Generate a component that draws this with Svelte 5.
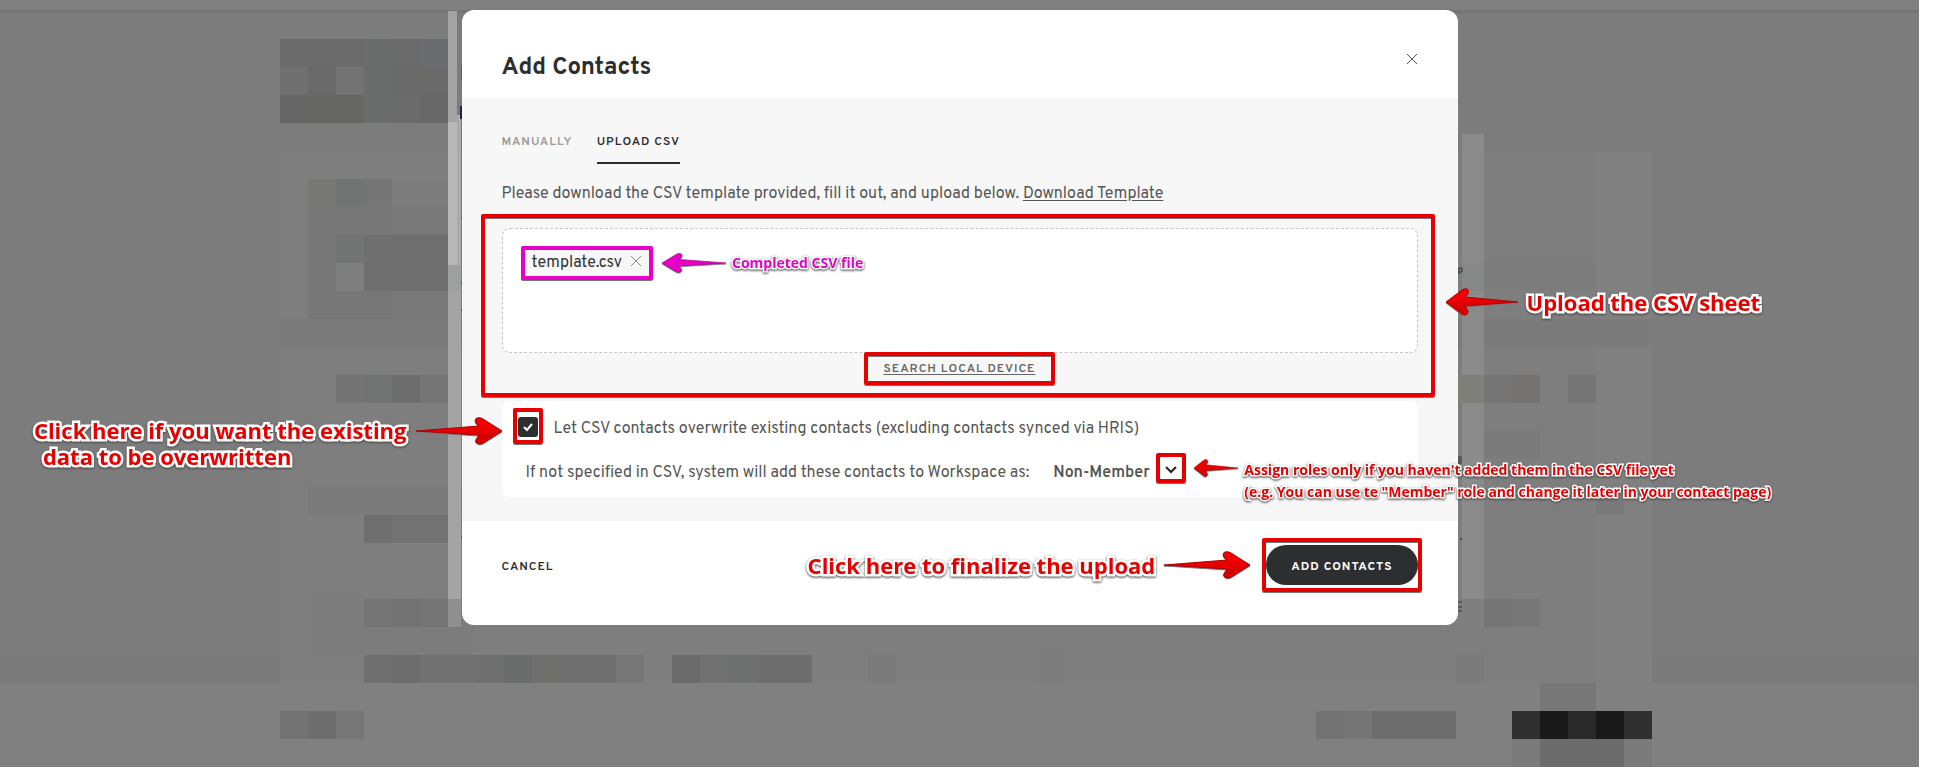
<script lang="ts">
  type Tile = [col: number, row: number, cols: number, rows: number, fill: string];

  const CELL = 28;
  const roles = ["Non-Member", "Member", "Admin"];

  let overwrite = $state(true);
  let role = $state("Non-Member");
  let tab = $state("upload");
  let files = $state(["template.csv"]);

  // pixelated page behind the dialog: column, row, width, height in cells
  const tiles: Tile[] = [
    [0, 4, 49, 19, "#7e7e7e"], [1, 4, 15, 7, "#7f7f7f"], [47, 4, 2, 19, "#808080"],
    [0, 0, 6, 1, "#6b6b6b"], [3, 0, 1, 3, "#6a6d6b"], [5, 0, 1, 1, "#6b6c6f"],
    [0, 1, 1, 1, "#707070"], [1, 1, 1, 1, "#6a6a6a"], [2, 1, 1, 1, "#737373"], [4, 1, 2, 1, "#6a6a6a"],
    [0, 2, 1, 1, "#666666"], [1, 2, 2, 1, "#666664"], [4, 2, 1, 1, "#6b6b6b"], [5, 2, 1, 1, "#676767"],
    [1, 5, 3, 5, "#777777"], [1, 5, 1, 1, "#777775"], [2, 5, 1, 1, "#717472"], [3, 5, 1, 1, "#757575"],
    [4, 5, 2, 1, "#7c7c7c"], [4, 6, 2, 4, "#787878"], [2, 7, 1, 1, "#717472"], [3, 7, 3, 2, "#6f6f6f"],
    [2, 8, 1, 1, "#7f7f7f"], [0, 10, 49, 1, "#7b7b7b"],
    [2, 12, 1, 1, "#737373"], [3, 12, 1, 1, "#707371"], [4, 12, 1, 1, "#6e6e6e"], [5, 12, 1, 1, "#757575"],
    [1, 16, 6, 1, "#7b7b7b"], [3, 17, 2, 1, "#6f6f6f"], [4, 17, 2, 1, "#727272"],
    [1, 20, 6, 2, "#7c7c7c"], [3, 20, 3, 1, "#747474"], [4, 20, 1, 1, "#727272"],
    [42, 12, 1, 1, "#80807b"], [43, 12, 1, 1, "#747474"], [44, 12, 1, 1, "#737270"], [46, 12, 1, 1, "#747474"],
    [43, 8, 4, 1, "#7c7c7c"], [43, 14, 2, 1, "#7b7b7b"], [47, 16, 1, 1, "#797979"],
    [43, 20, 1, 1, "#747474"], [44, 20, 1, 1, "#777777"],
    [3, 22, 1, 1, "#707070"], [4, 22, 1, 1, "#6d6d6d"], [5, 22, 2, 1, "#717171"], [7, 22, 1, 1, "#6f6f6f"],
    [8, 22, 1, 1, "#6a6d6b"], [9, 22, 1, 1, "#6f6f6c"], [10, 22, 2, 1, "#707070"], [12, 22, 1, 1, "#767676"],
    [14, 22, 1, 1, "#6b6b6b"], [15, 22, 1, 1, "#717171"], [16, 22, 1, 1, "#6e716f"], [17, 22, 2, 1, "#6e6e6e"],
    [21, 22, 1, 1, "#7b7b7b"], [27, 22, 1, 1, "#7c7c7c"], [42, 22, 1, 1, "#7b7b7b"],
    [0, 24, 1, 1, "#727272"], [1, 24, 1, 1, "#6e6e6e"], [2, 24, 1, 1, "#767676"],
    [37, 24, 1, 1, "#727272"], [38, 24, 1, 1, "#757575"], [39, 24, 3, 1, "#6e6e6e"],
    [45, 23, 2, 1, "#777777"], [44, 24, 1, 1, "#303030"], [45, 24, 1, 1, "#191919"], [46, 24, 1, 1, "#292929"],
    [47, 24, 1, 1, "#191919"], [48, 24, 1, 1, "#303030"], [45, 25, 3, 1, "#6c6c6c"], [44, 25, 1, 1, "#7b7b7b"], [48, 25, 1, 1, "#7b7b7b"]
  ];
</script>

{#snippet arrow(kind: string)}
  <svg class="arrow {kind}" viewBox="0 0 86 28" preserveAspectRatio="none" aria-hidden="true">
    <path d="M0 14 L63 9 L60 6 Q58 2 61 1 Q64 0 67 2 L86 14 L67 26 Q64 28 61 26 Q58 24 61 21 L63 18 Z" />
  </svg>
{/snippet}

<svelte:head><title>Add Contacts</title></svelte:head>

<div class="page">
  <svg class="backdrop" width="1919" height="767" aria-hidden="true">
    <defs>
      <linearGradient id="bar" x2="0" y2="1"><stop offset="0" stop-color="#727272" /><stop offset="1" stop-color="#7c7c7c" /></linearGradient>
      <linearGradient id="red" x2="0" y2="1"><stop offset=".3" stop-color="#f50000" /><stop offset=".7" stop-color="#d80000" /></linearGradient>
    </defs>
    <rect width="1919" height="10" fill="#808080" />
    <rect y="10" width="1919" height="5" fill="url(#bar)" />
    <rect y="655" width="1919" height="28" fill="#7a7a7a" />
    <rect y="683" width="1919" height="84" fill="#808080" />
    {#each tiles as [col, row, cols, rows, fill]}
      <rect x={280 + col * CELL} y={39 + row * CELL} width={cols * CELL} height={rows * CELL} {fill} />
    {/each}
    <rect x="448" y="11" width="9" height="111" fill="#a3a3a3" />
    <rect x="457" y="115" width="4" height="150" fill="#aaaaaa" />
    <rect x="448" y="122" width="9" height="143" fill="#b8b8b8" />
    <rect x="448" y="265" width="13" height="334" fill="#a4a4a4" />
    <rect x="448" y="265" width="13" height="26" fill="#9da09e" />
    <rect x="448" y="599" width="13" height="28" fill="#8f8f8f" />
    <rect x="1462" y="134" width="22" height="465" fill="#8b8b8b" />
    <rect x="1462" y="263" width="22" height="28" fill="#858886" />
    <rect x="1462" y="375" width="22" height="28" fill="#80807a" />
    <rect x="1462" y="599" width="22" height="28" fill="#7f7f7f" />
    <rect x="461" y="65" width="1" height="16" fill="#8a5a1c" />
    <rect x="460" y="106" width="2" height="13" fill="#28203c" />
    <path d="M461 218h1M461 283h1M461 310h1M461 537h1M1460 539h2" stroke="#222" />
    <path d="M1459 268v6M1459 268h3v4h-3M1459 456v8M1461 456v8M1458 602h4M1458 607h4M1458 611h4" stroke="#333" fill="none" />
  </svg>

  <div class="dialog" role="dialog" aria-labelledby="dialog-title">
    <header>
      <h1 id="dialog-title">Add Contacts</h1>
      <button class="close" type="button" aria-label="Close">
        <svg viewBox="0 0 12 12"><path d="M1 1l10 10M11 1L1 11" /></svg>
      </button>
    </header>

    <div class="body">
      <div class="tabs" role="tablist" aria-label="Add contacts">
        <button type="button" role="tab" aria-selected={tab === "manual"} onclick={() => (tab = "manual")}>MANUALLY</button>
        <button type="button" role="tab" aria-selected={tab === "upload"} onclick={() => (tab = "upload")}>UPLOAD CSV</button>
      </div>

      <p>Please download the CSV template provided, fill it out, and upload below. <a href="#template">Download Template</a></p>

      <section class="upload">
        <div class="dropzone">
          {#each files as file}
            <div class="file">
              <span class="name">{file}</span>
              <button type="button" aria-label="Remove {file}" onclick={() => (files = [])}>
                <svg viewBox="0 0 12 12"><path d="M1 1l10 10M11 1L1 11" /></svg>
              </button>
              <div class="note after pink small">{@render arrow("left short")}<div class="text">Completed CSV file</div></div>
            </div>
          {/each}
        </div>
        <a class="search" href="#search">SEARCH LOCAL DEVICE</a>
        <div class="frame"></div>
        <div class="note outer">{@render arrow("left")}<div class="text">Upload the CSV sheet</div></div>
      </section>

      <section class="options">
        <div class="row">
          <div class="check">
            <input id="overwrite" type="checkbox" bind:checked={overwrite} />
            {#if overwrite}<svg class="tick" viewBox="0 0 20 20" aria-hidden="true"><path d="M6 10l3 3 5-6" /></svg>{/if}
            <div class="note before lines">
              <div class="text">
                <div>Click here if you want the existing</div>
                <div class="indent">data to be overwritten</div>
              </div>
              {@render arrow("right")}
            </div>
          </div>
          <label for="overwrite">Let CSV contacts overwrite existing contacts (excluding contacts synced via HRIS)</label>
        </div>
        <div class="row role">
          <label for="role">If not specified in CSV, system will add these contacts to Workspace as:</label>
          <div class="select">
            <select id="role" bind:value={role}>
              {#each roles as name}<option>{name}</option>{/each}
            </select>
            <div class="chevron"><svg viewBox="0 0 12 8" aria-hidden="true"><path d="M1 1l5 5 5-5" /></svg></div>
            <div class="note after small lines">
              {@render arrow("left tiny")}
              <div class="text">
                <div>Assign roles only if you haven't added them in the CSV file yet</div>
                <div>(e.g. You can use te "Member" role and change it later in your contact page)</div>
              </div>
            </div>
          </div>
        </div>
      </section>
    </div>

    <footer>
      <button class="cancel" type="button">CANCEL</button>
      <div class="submit">
        <div class="note before"><div class="text">Click here to finalize the upload</div>{@render arrow("right")}</div>
        <button type="button">ADD CONTACTS</button>
      </div>
    </footer>
  </div>
</div>

<style>
  :global(body) { background: #fff; }
  .page { position: relative; box-sizing: border-box; min-height: 100vh; margin-right: 22px; padding-top: 10px; background: #7c7c7c; color: #555; font: 16px/20px Overpass, Inter, sans-serif; }
  .backdrop { position: absolute; top: 0; left: 0; max-width: 100%; }
  .dialog { position: relative; max-width: 996px; margin: 0 auto; border-radius: 12px; background: #fff; }
  button { border: 0; padding: 0; background: none; color: #2d2e30; font: 600 12px/20px Overpass, Inter, sans-serif; letter-spacing: 1px; cursor: pointer; }
  button svg { display: block; width: 12px; height: 12px; fill: none; stroke: #555; }

  header { display: flex; align-items: flex-start; justify-content: space-between; padding: 42px 40px 14px; }
  h1 { margin: 0; color: #2d2e30; font-size: 24px; line-height: 32px; font-weight: 700; }
  .close { margin-top: 1px; }

  .body { padding: 34px 40px 24px; background: #f7f7f7; }
  .tabs { display: flex; gap: 24px; }
  .tabs button { border-bottom: 2px solid transparent; padding-bottom: 10px; color: #999; }
  .tabs button[aria-selected="true"] { border-color: #2d2e30; color: #2d2e30; }
  p { margin: 18px 0 22px; line-height: 24px; }
  a { color: #555; text-underline-offset: 2px; }

  .upload { position: relative; display: flex; flex-direction: column; align-items: center; }
  .dropzone { box-sizing: border-box; width: 100%; min-height: 125px; border: 1px dashed #c4c4c4; border-radius: 8px; background: #fff; padding: 17px 18px; }
  .frame { position: absolute; inset: -14px -17px -18px -21px; border: 4px solid #e60000; border-radius: 2px; box-shadow: inset 0 1px #777, 0 1px #777; pointer-events: none; }
  .file { position: relative; display: flex; align-items: center; box-sizing: border-box; width: fit-content; height: 34px; gap: 8px; border: 4px solid #e600c8; border-radius: 2px; padding: 0 7px 4px; background: #f7f7f7; box-shadow: 0 1px #777; color: #333; }
  .name { padding-top: 4px; }
  .file button svg { stroke: #888; }
  .search { position: relative; margin-top: 6px; color: #666; font-size: 12px; font-weight: 600; letter-spacing: 1px; }
  .search::after { position: absolute; inset: -7px -20px -6px; border: 4px solid #e60000; border-radius: 2px; box-shadow: inset 0 1px #777, 0 1px #777; content: ""; }

  .options { display: flex; flex-direction: column; gap: 24px; margin-top: 22px; border-radius: 8px; background: #fff; padding: 16px; }
  .row { display: flex; align-items: center; gap: 16px; height: 20px; }
  .row label { padding-top: 4px; }
  .role { gap: 24px; padding-left: 8px; }
  .check, .select, .submit { position: relative; display: flex; align-items: center; }
  .check, .select { height: 20px; }
  .check input { width: 20px; height: 20px; margin: 0; border-radius: 3px; background: #2d2e30; appearance: none; }
  .check input:not(:checked) { border: 1px solid #777; background: #fff; }
  .tick { position: absolute; inset: 0; fill: none; stroke: #fff; stroke-width: 2; pointer-events: none; }
  .check::after { position: absolute; inset: -9px -5px -7px; border: 4px solid #e60000; border-radius: 2px; box-shadow: 0 1px #777; content: ""; pointer-events: none; }
  select { border: 0; padding: 4px 36px 0 0; background: none; color: #555; font: 600 16px/20px Overpass, Inter, sans-serif; appearance: none; }
  .chevron { position: absolute; top: -8px; right: 0; display: grid; place-items: center; box-sizing: border-box; width: 30px; height: 30px; border: 4px solid #e60000; border-radius: 2px; padding-top: 4px; box-shadow: 0 1px #777; pointer-events: none; }
  .chevron svg { width: 12px; height: 8px; fill: none; stroke: #222; stroke-width: 2; }

  footer { display: flex; align-items: center; justify-content: space-between; padding: 24px 40px 40px; }
  .cancel { padding-top: 3px; }
  .submit button { height: 40px; border-radius: 20px; padding: 3px 25px 0; background: #2d2e30; color: #fff; font-weight: 700; }
  .submit::after { position: absolute; inset: -7px -4px; border: 4px solid #e60000; border-radius: 2px; box-shadow: inset 0 1px #777, 0 1px #777; content: ""; pointer-events: none; }

  .note { position: absolute; z-index: 1; top: 50%; display: flex; align-items: center; gap: 9px; transform: translateY(-50%); color: #e60000; font: 700 22px/26px "Open Sans", "Noto Sans", sans-serif; white-space: nowrap; pointer-events: none; }
  .text { -webkit-text-stroke: 5px #fff; paint-order: stroke fill; filter: drop-shadow(0 1px 1px #444); }
  .small { gap: 6px; font-size: 14px; line-height: 22px; }
  .small .text { -webkit-text-stroke-width: 3px; }
  .lines { top: 0; align-items: flex-start; transform: none; }
  .after { left: calc(100% + 8px); }
  .outer { top: 49%; left: calc(100% + 28px); }
  .before { right: calc(100% + 16px); }
  .pink { left: calc(100% + 13px); color: #e600c8; }
  .select .note { top: -2px; }
  .indent { padding-left: 9px; }
  .arrow { flex: none; width: 86px; height: 28px; fill: url(#red); stroke: #a00; stroke-width: 1; filter: drop-shadow(0 1px 0 #777); }
  .left { width: 72px; transform: scaleX(-1); }
  .short { width: 64px; height: 20px; }
  .tiny { width: 44px; height: 18px; }
  .pink .arrow { fill: #e600c8; stroke: #b0009a; }
</style>
